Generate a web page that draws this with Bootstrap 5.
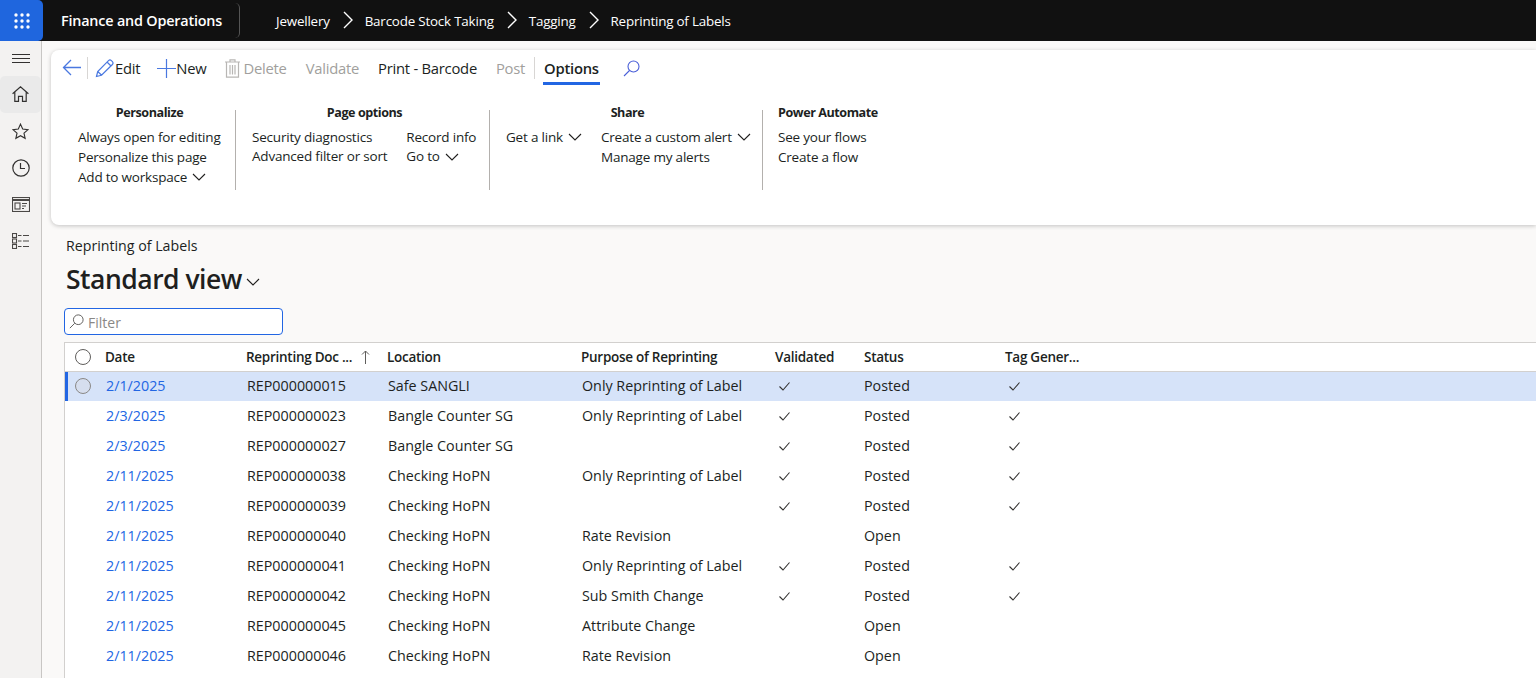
<!DOCTYPE html>
<html lang="en">
<head>
<meta charset="UTF-8">
<title>Reprinting of Labels</title>
<link href="https://cdn.jsdelivr.net/npm/bootstrap@5.3.0/dist/css/bootstrap.min.css" rel="stylesheet">
<style>
html, body { height: 100%; overflow: hidden; }
body { font-family: "Open Sans", "Liberation Sans", sans-serif; font-size: 13.5px; color: #201f1e; background: #faf9f8; }
svg { display: block; flex: none; }
.topbar { height: 41px; background: #111; color: #fff; }
.waffle { width: 43px; height: 41px; background: #1f66de; border-radius: 0 5px 5px 0; }
.appname { width: 197px; height: 35px; padding-left: 18px; font-size: 14.4px; font-weight: 600; border-right: 1px solid #555; border-radius: 0 5px 5px 0; letter-spacing: -.2px; }
.crumbs { padding: 1px 0 0 36px; font-size: 13.4px; letter-spacing: -.2px; }
.crumb-sep { margin: -1px 12px 0 13px; }
.main-row { height: 637px; }
.sidenav { width: 42px; flex: none; background: #f3f2f1; border-right: 1px solid #c8c6c4; padding-top: 9px; }
.navbtn { width: 41px; height: 36.7px; }
.navbtn.on { background: #eaeaea; border-radius: 5px; }
.navbtn.burger { height: 18px; margin-bottom: 8px; }
.workarea { padding: 9px 0 0 9px; min-width: 0; overflow: hidden; }
.ribbon { height: 175px; background: #fff; border-radius: 8px 0 0 8px; box-shadow: 0 1px 4px rgba(0,0,0,.22); }
.cmdbar { height: 36px; padding: 0 0 0 11px; font-size: 14.8px; letter-spacing: -.25px; }
.back-arrow { margin-top: -2px; }
.cmd { height: 28px; white-space: nowrap; }
.cmd.off { color: #a19f9d; }
.cmd-div { width: 1px; height: 22px; background: #d8d6d4; }
.cmd-div.d1 { margin: 0 7px 0 6px; }
.cmd-div.d2 { margin: 0 9px; }
.cmd-active { font-weight: 600; position: relative; color: #201f1e; }
.cmd-active::after { content: ""; position: absolute; left: -1px; right: -1px; bottom: -3px; height: 3px; background: #2266e3; }
.gap-a { margin-left: 19px; }
.gap-p { margin-left: 17px; }
.gap-t { margin-left: 3px; }
.gap-e { margin-left: 1px; }
.rgroups { padding-top: 24px; }
.rgroup { height: 80px; border-right: 1px solid #b3b0ad; }
.rtitle { font-weight: 700; font-size: 12.6px; line-height: 16px; letter-spacing: -.45px; margin-bottom: 6px; margin-top: -5px; text-align: center; white-space: nowrap; }
.ritem { line-height: 20px; white-space: nowrap; letter-spacing: -.2px; display: flex; align-items: center; gap: 5px; }
.g1 { width: 185px; padding-left: 27px; }
.g1 .rtitle { width: 143px; }
.g2 { width: 254px; padding-left: 16px; }
.g2 .rtitle { width: 225px; }
.g2 .ritem { line-height: 19px; }
.g2-cols { gap: 19px; padding-top: 1px; }
.g3 { width: 273px; padding-left: 16px; }
.g3 .rtitle { width: 243px; }
.g3-first { width: 95px; }
.g4 { padding-left: 15px; }
.g4 .rtitle { width: 99px; }
.pagecap { margin: 12px 0 0 15px; line-height: 18px; font-size: 14.2px; }
.viewname { margin: 6px 0 0 15px; font-size: 26.5px; font-weight: 600; line-height: 36px; letter-spacing: -.5px; }
.view-caret { margin: 6px 0 0 4px; }
.filterbox { width: 219px; height: 27px; margin: 11px 0 7px 13px; background: #fff; border: 1px solid #2266e3; border-radius: 4px; padding-left: 4px; color: #8a8886; font-size: 14px; }
.filterbox span { padding-top: 2px; }
.griddata { margin-left: 13px; background: #fff; border-left: 1px solid #d2d0ce; min-height: 340px; }
.grow-head, .grow-data { display: grid; grid-template-columns: 40px 141px 141px 194px 194px 89px 141px 1fr; align-items: center; white-space: nowrap; }
.grow-head { height: 30px; border-top: 1px solid #d2d0ce; border-bottom: 1px solid #d2d0ce; font-weight: 600; font-size: 13.5px; letter-spacing: -.27px; }
.sort-arrow { margin-left: 9px; }
.grow-data { height: 30px; padding-bottom: 2px; font-size: 14.3px; }
.grow-data > span { padding-left: 1px; }
.grow-data > span:nth-child(7) { padding-left: 0; }
.grow-data.picked { background: #d6e3f9; box-shadow: inset 3px 0 0 #2266e3; height: 29px; padding-bottom: 1px; margin-bottom: 1px; }
.datelink { color: #2266e3; }
.radio-dot { width: 16px; height: 16px; border: 1px solid #605e5c; border-radius: 50%; margin-left: 10px; }
.picked .radio-dot { background: #d6deee; border: 1.5px solid #8a8886; }
.tick { margin-left: 3px; }
</style>
</head>
<body>

<div class="topbar d-flex align-items-center">
  <div class="waffle d-flex align-items-center justify-content-center">
    <svg width="18" height="18" viewBox="0 0 18 18" fill="#fff"><circle cx="3" cy="3" r="1.7"/><circle cx="9" cy="3" r="1.7"/><circle cx="15" cy="3" r="1.7"/><circle cx="3" cy="9" r="1.7"/><circle cx="9" cy="9" r="1.7"/><circle cx="15" cy="9" r="1.7"/><circle cx="3" cy="15" r="1.7"/><circle cx="9" cy="15" r="1.7"/><circle cx="15" cy="15" r="1.7"/></svg>
  </div>
  <div class="appname d-flex align-items-center">Finance and Operations</div>
  <div class="crumbs d-flex align-items-center">
    <span>Jewellery</span>
    <svg class="crumb-sep" width="10" height="18" viewBox="0 0 10 18" fill="none" stroke="#fff" stroke-width="1.4"><path d="M1 1l8 8-8 8"/></svg>
    <span>Barcode Stock Taking</span>
    <svg class="crumb-sep" width="10" height="18" viewBox="0 0 10 18" fill="none" stroke="#fff" stroke-width="1.4"><path d="M1 1l8 8-8 8"/></svg>
    <span>Tagging</span>
    <svg class="crumb-sep" width="10" height="18" viewBox="0 0 10 18" fill="none" stroke="#fff" stroke-width="1.4"><path d="M1 1l8 8-8 8"/></svg>
    <span>Reprinting of Labels</span>
  </div>
</div>

<div class="main-row d-flex">
  <div class="sidenav d-flex flex-column">
    <div class="navbtn burger d-flex align-items-center justify-content-center">
      <svg width="18" height="10" viewBox="0 0 18 10" stroke="#323130" stroke-width="1"><path d="M0 .5h18M0 4.5h18M0 8.5h18"/></svg>
    </div>
    <div class="navbtn on d-flex align-items-center justify-content-center">
      <svg width="17" height="16" viewBox="0 0 17 16" fill="none" stroke="#323130" stroke-width="1.2"><path d="M.6 7.800L8.500 .8l7.900 7M2.800 6v9.300h3.700v-5h4v5h3.700V6"/></svg>
    </div>
    <div class="navbtn d-flex align-items-center justify-content-center">
      <svg width="17" height="17" viewBox="0 0 18 18" fill="none" stroke="#323130" stroke-width="1.2"><path d="M9 1.200l2.300 5.200 5.600.6-4.200 3.700 1.200 5.500L9 13.400l-4.900 2.800 1.200-5.500L1.100 7l5.600-.6z"/></svg>
    </div>
    <div class="navbtn d-flex align-items-center justify-content-center">
      <svg width="18" height="18" viewBox="0 0 18 18" fill="none" stroke="#323130" stroke-width="1.2"><circle cx="9" cy="9" r="8.200"/><path d="M8.500 4v5.500H13"/></svg>
    </div>
    <div class="navbtn d-flex align-items-center justify-content-center">
      <svg width="18" height="15" viewBox="0 0 18 15" fill="none" stroke="#4a4846" stroke-width="1.1"><rect x=".5" y=".5" width="17" height="14"/><path d="M.5 3h17" stroke-width="2"/><rect x="3" y="6" width="5" height="6"/><path d="M10 6.500h5M10 9h4M10 11.500h2"/></svg>
    </div>
    <div class="navbtn d-flex align-items-center justify-content-center">
      <svg width="17" height="16" viewBox="0 0 17 16" fill="none" stroke="#4a4846" stroke-width="1.1"><rect x=".5" y=".5" width="4" height="4"/><rect x=".5" y="6" width="4" height="4"/><rect x=".5" y="11.500" width="4" height="4"/><path d="M6 2.500h3.500M11 2.500h6M6 8h3.500M11 8h6M6 13.500h3.500M11 13.500h6"/></svg>
    </div>
  </div>

  <div class="workarea flex-grow-1">
    <div class="ribbon">
      <div class="cmdbar d-flex align-items-center">
        <svg class="back-arrow" width="19" height="17" viewBox="0 0 19 17" fill="none" stroke="#4a78e0" stroke-width="1.3"><path d="M9 1L1.500 8.500 9 16M1.500 8.500H19"/></svg>
        <div class="cmd-div d1"></div>
        <svg width="19" height="19" viewBox="0 0 19 19" fill="none" stroke="#4a78e0" stroke-width="1.2"><path d="M1.500 17.500l1.200-5L13.500 1.600c.9-.8 2-.8 2.900 0l1 1c.8.9.8 2 0 2.900L6.500 16.300zM2.700 12.500l4 3.800M12 3l4 4"/></svg>
        <span class="cmd gap-e d-flex align-items-center">Edit</span>
        <svg class="gap-p" width="19" height="19" viewBox="0 0 19 19" stroke="#4a78e0" stroke-width="1.2"><path d="M9.500 0v19M0 9.500h19"/></svg>
        <span class="cmd d-flex align-items-center">New</span>
        <svg class="gap-a" width="15" height="19" viewBox="0 0 15 19" fill="none" stroke="#b8b6b4" stroke-width="1.2"><path d="M0 3h15M5 3V.8h5V3M1.500 3v15.200h12V3M5 6v9.500M7.500 6v9.500M10 6v9.500"/></svg>
        <span class="cmd off gap-t d-flex align-items-center">Delete</span>
        <span class="cmd off gap-a d-flex align-items-center">Validate</span>
        <span class="cmd gap-a d-flex align-items-center">Print - Barcode</span>
        <span class="cmd off gap-a d-flex align-items-center">Post</span>
        <div class="cmd-div d2"></div>
        <span class="cmd cmd-active d-flex align-items-center">Options</span>
        <svg class="ms-4" width="17" height="17" viewBox="0 0 17 17" fill="none" stroke="#4a5fd8" stroke-width="1.1"><circle cx="10.500" cy="6.500" r="5.500"/><path d="M6.500 10.500L1 16"/></svg>
      </div>

      <div class="rgroups d-flex">
        <div class="rgroup g1">
          <div class="rtitle">Personalize</div>
          <div class="ritem">Always open for editing</div>
          <div class="ritem">Personalize this page</div>
          <div class="ritem">Add to workspace
            <svg width="14" height="8" viewBox="0 0 14 8" fill="none" stroke="#201f1e" stroke-width="1.1"><path d="M1 1l6 6 6-6"/></svg>
          </div>
        </div>
        <div class="rgroup g2">
          <div class="rtitle">Page options</div>
          <div class="d-flex g2-cols">
            <div>
              <div class="ritem">Security diagnostics</div>
              <div class="ritem">Advanced filter or sort</div>
            </div>
            <div>
              <div class="ritem">Record info</div>
              <div class="ritem">Go to
                <svg width="14" height="8" viewBox="0 0 14 8" fill="none" stroke="#201f1e" stroke-width="1.1"><path d="M1 1l6 6 6-6"/></svg>
              </div>
            </div>
          </div>
        </div>
        <div class="rgroup g3">
          <div class="rtitle">Share</div>
          <div class="d-flex">
            <div class="g3-first">
              <div class="ritem">Get a link
                <svg width="14" height="8" viewBox="0 0 14 8" fill="none" stroke="#201f1e" stroke-width="1.1"><path d="M1 1l6 6 6-6"/></svg>
              </div>
            </div>
            <div>
              <div class="ritem">Create a custom alert
                <svg width="14" height="8" viewBox="0 0 14 8" fill="none" stroke="#201f1e" stroke-width="1.1"><path d="M1 1l6 6 6-6"/></svg>
              </div>
              <div class="ritem">Manage my alerts</div>
            </div>
          </div>
        </div>
        <div class="g4">
          <div class="rtitle">Power Automate</div>
          <div class="ritem">See your flows</div>
          <div class="ritem">Create a flow</div>
        </div>
      </div>
    </div>

    <div class="pagecap">Reprinting of Labels</div>
    <div class="viewname d-flex align-items-center">Standard view
      <svg class="view-caret" width="14" height="8" viewBox="0 0 14 8" fill="none" stroke="#201f1e" stroke-width="1.1"><path d="M1 1l6 6 6-6"/></svg>
    </div>
    <div class="filterbox d-flex align-items-center gap-1">
      <svg width="15" height="15" viewBox="0 0 17 17" fill="none" stroke="#605e5c" stroke-width="1.1"><circle cx="10.500" cy="6.500" r="5.500"/><path d="M6.500 10.500L1 16"/></svg>
      <span>Filter</span>
    </div>

    <div class="griddata" id="grid">
      <div class="grow-head">
        <div class="radio-dot"></div>
        <span>Date</span>
        <span class="d-flex align-items-center">Reprinting Doc ...
          <svg class="sort-arrow" width="9" height="14" viewBox="0 0 9 14" fill="none" stroke="#605e5c"><path d="M4.500 14V1M1 4.500L4.500 1 8 4.500"/></svg>
        </span>
        <span>Location</span>
        <span>Purpose of Reprinting</span>
        <span>Validated</span>
        <span>Status</span>
        <span>Tag Gener...</span>
      </div>
    </div>
  </div>
</div>

<script src="https://cdn.jsdelivr.net/npm/bootstrap@5.3.0/dist/js/bootstrap.bundle.min.js"></script>
<script>
const rows = [
  ['2/1/2025', 'REP000000015', 'Safe SANGLI', 'Only Reprinting of Label', 1, 'Posted', 1],
  ['2/3/2025', 'REP000000023', 'Bangle Counter SG', 'Only Reprinting of Label', 1, 'Posted', 1],
  ['2/3/2025', 'REP000000027', 'Bangle Counter SG', '', 1, 'Posted', 1],
  ['2/11/2025', 'REP000000038', 'Checking HoPN', 'Only Reprinting of Label', 1, 'Posted', 1],
  ['2/11/2025', 'REP000000039', 'Checking HoPN', '', 1, 'Posted', 1],
  ['2/11/2025', 'REP000000040', 'Checking HoPN', 'Rate Revision', 0, 'Open', 0],
  ['2/11/2025', 'REP000000041', 'Checking HoPN', 'Only Reprinting of Label', 1, 'Posted', 1],
  ['2/11/2025', 'REP000000042', 'Checking HoPN', 'Sub Smith Change', 1, 'Posted', 1],
  ['2/11/2025', 'REP000000045', 'Checking HoPN', 'Attribute Change', 0, 'Open', 0],
  ['2/11/2025', 'REP000000046', 'Checking HoPN', 'Rate Revision', 0, 'Open', 0]
];
const tick = '<svg class="tick" width="11" height="9" viewBox="0 0 11 9" fill="none" stroke="#323130" stroke-width="1.1"><path d="M.5 4.500L4 8l6.500-7.500"/></svg>';
const grid = document.getElementById('grid');
rows.forEach((r, i) => {
  const div = document.createElement('div');
  div.className = 'grow-data' + (i === 0 ? ' picked' : '');
  div.innerHTML = `
    ${i === 0 ? '<div class="radio-dot"></div>' : '<div></div>'}
    <span class="datelink">${r[0]}</span>
    <span>${r[1]}</span>
    <span>${r[2]}</span>
    <span>${r[3]}</span>
    <span>${r[4] ? tick : ''}</span>
    <span>${r[5]}</span>
    <span>${r[6] ? tick : ''}</span>`;
  grid.appendChild(div);
});
</script>
</body>
</html>
